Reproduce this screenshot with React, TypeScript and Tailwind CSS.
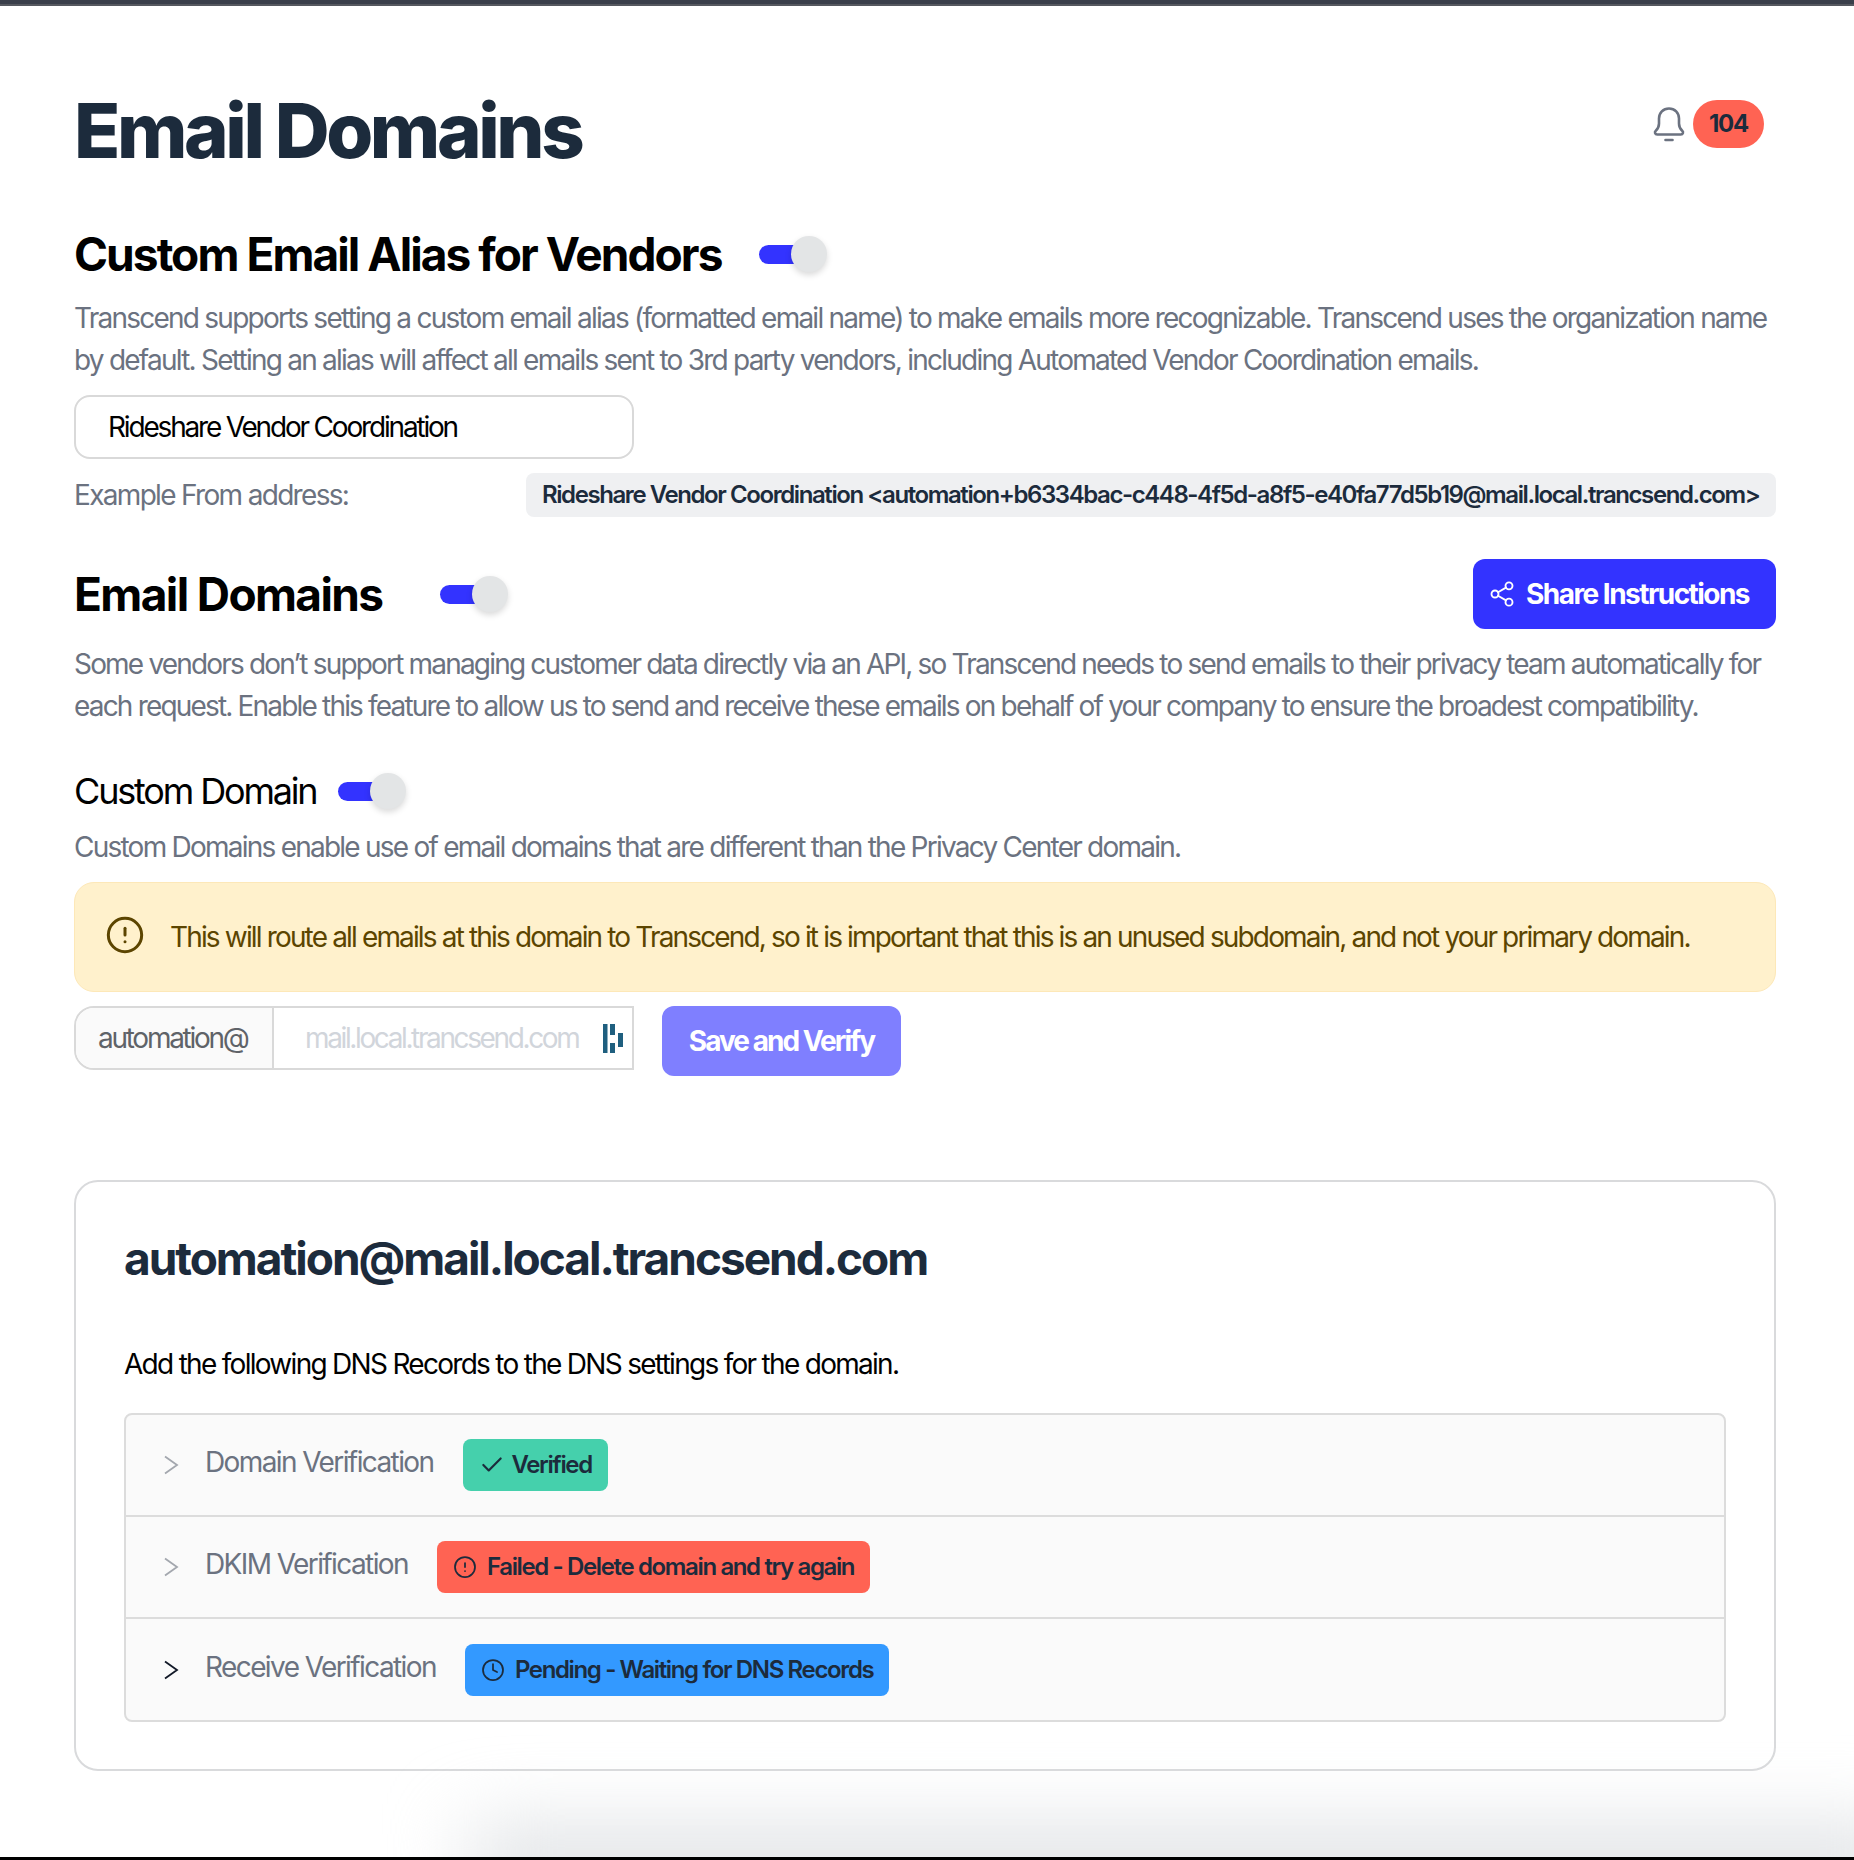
import { Share2, AlertCircle, Check, Clock } from 'lucide-react';

function Toggle() {
  return (
    <div className="flex items-center w-[68px] h-[36px]">
      <div className="w-[48px] h-[19px] rounded-full bg-[#3333ff]" />
      <div className="-ml-[16px] w-[36px] h-[36px] rounded-full bg-[#e3e5e6] shadow-[0_3px_6px_rgba(0,0,0,0.15)]" />
    </div>
  );
}

function DashIcon() {
  return (
    <svg width="20" height="29" viewBox="0 0 20 29" fill="#1f5f7f" className="shrink-0">
      <path d="M0 0h4.5v29H0z" />
      <path d="M7 0h5v11H7zM7 19h5v10H7z" />
      <path d="M15 9h5v14h-5z" />
    </svg>
  );
}

function BellIcon() {
  return (
    <svg width="32" height="35" viewBox="0 0 32 35" fill="none" stroke="#6b7280" strokeWidth="2.6" strokeLinecap="round" strokeLinejoin="round">
      <path d="M16 1.5c-5.8 0-10 4.4-10 10v5c0 3.4-1.2 5.4-3.2 7.2-1.6 1.5-.8 3.8 1.4 3.8h23.6c2.2 0 3-2.3 1.4-3.8-2-1.8-3.2-3.8-3.2-7.2v-5c0-5.6-4.2-10-10-10z" />
      <path d="M12.5 33h7" />
    </svg>
  );
}

function Chevron({ muted }: { muted?: boolean }) {
  return (
    <svg width="16" height="20" viewBox="0 0 16 20" fill="none" stroke={muted ? '#a3a7ae' : '#111827'} strokeWidth="1.8" className="shrink-0">
      <path d="M2 1.5L14 10L2 18.5" />
    </svg>
  );
}

function VerificationRow({ label, muted, children }: { label: string; muted?: boolean; children: React.ReactNode }) {
  return (
    <div className="flex items-center h-[102px] pl-[37px] gap-[26px] border-b-2 border-[#dcdcdc] last:border-b-0 last:h-[101px]">
      <Chevron muted={muted} />
      <div className="flex items-center gap-[29px]">
        <span className="text-[28px] tracking-[-0.057em] text-[#6b7280] -mt-[6px]">{label}</span>
        {children}
      </div>
    </div>
  );
}

function Badge({ color, icon, children }: { color: string; icon: React.ReactNode; children: React.ReactNode }) {
  return (
    <div className={`flex items-center gap-[10px] h-[52px] pl-[16px] pr-[16px] rounded-[8px] text-[24px] font-semibold tracking-[-0.057em] text-[#1c2b3c] ${color}`}>
      {icon}
      {children}
    </div>
  );
}

export default function App() {
  return (
    <div className="relative h-[1860px] overflow-hidden bg-white font-['Inter',sans-serif]">
      <div className="h-[6px] bg-[#3a3f4a] border-b-2 border-[#55585f]" />

      <div className="pl-[74px] pr-[78px]">
        {/* Header */}
        <div className="flex justify-between items-start pt-[84px] h-[226px]">
          <h1 className="text-[76px] leading-[80px] font-extrabold tracking-[-0.045em] text-[#1c2b3c]">Email Domains</h1>
          <div className="flex items-center gap-[8px] mt-[10px] mr-[12px]">
            <BellIcon />
            <span className="flex items-center justify-center w-[71px] h-[48px] rounded-full bg-[#ff6353] text-[24px] font-bold tracking-[-0.05em] text-[#1c2b3c]">104</span>
          </div>
        </div>

        {/* Alias */}
        <div className="flex items-center gap-[38px] h-[60px] mt-[-8px]">
          <h2 className="text-[46px] font-bold tracking-[-0.042em] text-black">Custom Email Alias for Vendors</h2>
          <Toggle />
        </div>
        <p className="mt-[13px] text-[28px] leading-[42px] tracking-[-0.063em] text-[#6b7280]">
          Transcend supports setting a custom email alias (formatted email name) to make emails more recognizable. Transcend uses the organization name by default. Setting an alias will affect all emails sent to 3rd party vendors, including Automated Vendor Coordination emails.
        </p>
        <div className="mt-[14px] flex items-center w-[560px] h-[64px] px-[32px] rounded-[16px] border-2 border-[#d9d9d9] text-[28px] tracking-[-0.078em] text-black">
          Rideshare Vendor Coordination
        </div>
        <div className="mt-[14px] flex items-center justify-between h-[44px]">
          <span className="text-[28px] tracking-[-0.06em] text-[#6b7280]">Example From address:</span>
          <span className="flex items-center w-[1250px] h-[44px] px-[16px] rounded-[8px] bg-[#eff0f2] text-[24px] font-semibold tracking-[-0.059em] text-[#1c2b3c] whitespace-nowrap">
            Rideshare Vendor Coordination &lt;automation+b6334bac-c448-4f5d-a8f5-e40fa77d5b19@mail.local.trancsend.com&gt;
          </span>
        </div>

        {/* Email Domains */}
        <div className="mt-[42px] flex items-center justify-between h-[70px]">
          <div className="flex items-center gap-[57px]">
            <h2 className="text-[46px] font-bold tracking-[-0.035em] text-black">Email Domains</h2>
            <Toggle />
          </div>
          <button className="flex items-center gap-[10px] w-[303px] h-[70px] pl-[15px] rounded-[12px] bg-[#3333ff] text-[28px] font-bold tracking-[-0.055em] text-white">
            <Share2 className="w-[28px] h-[28px]" strokeWidth={1.6} />
            Share Instructions
          </button>
        </div>
        <p className="mt-[14px] text-[28px] leading-[42px] tracking-[-0.065em] text-[#6b7280]">
          Some vendors don’t support managing customer data directly via an API, so Transcend needs to send emails to their privacy team automatically for each request. Enable this feature to allow us to send and receive these emails on behalf of your company to ensure the broadest compatibility.
        </p>

        {/* Custom Domain */}
        <div className="mt-[44px] flex items-center gap-[22px] h-[40px]">
          <span className="text-[36px] font-normal tracking-[-0.06em] text-black">Custom Domain</span>
          <Toggle />
        </div>
        <p className="mt-[15px] text-[28px] leading-[42px] tracking-[-0.063em] text-[#6b7280]">
          Custom Domains enable use of email domains that are different than the Privacy Center domain.
        </p>
        <div className="mt-[14px] flex items-center gap-[25px] h-[110px] pl-[30px] rounded-[20px] border border-[#fde8b8] bg-[#fff1cc] text-[28px] tracking-[-0.066em] text-[#5c4500] whitespace-nowrap">
          <AlertCircle className="w-[40px] h-[40px] -mt-[4px] shrink-0" strokeWidth={1.8} />
          This will route all emails at this domain to Transcend, so it is important that this is an unused subdomain, and not your primary domain.
        </div>

        <div className="mt-[14px] flex items-start gap-[28px]">
          <div className="flex w-[560px] h-[64px] border-2 border-[#d9d9d9] rounded-l-[20px] text-[28px] whitespace-nowrap">
            <span className="flex items-center shrink-0 w-[198px] pl-[22px] rounded-l-[18px] bg-[#fafafa] border-r-2 border-[#d9d9d9] text-[#5f6368] tracking-[-0.081em]">automation@</span>
            <div className="flex flex-1 min-w-0 items-center justify-between pl-[31px] pr-[9px] text-[#d1d5db] tracking-[-0.085em]">
              mail.local.trancsend.com
              <DashIcon />
            </div>
          </div>
          <button className="w-[239px] h-[70px] rounded-[12px] bg-[#7f7fff] text-[28px] font-bold tracking-[-0.07em] text-white">
            Save and Verify
          </button>
        </div>

        {/* DNS card */}
        <div className="mt-[104px] h-[591px] px-[48px] pt-[42px] rounded-[24px] border-2 border-[#d9dadc]">
          <h3 className="text-[46px] font-bold tracking-[-0.044em] text-[#1c2b3c]">automation@mail.local.trancsend.com</h3>
          <p className="mt-[50px] text-[28px] tracking-[-0.061em] text-black">Add the following DNS Records to the DNS settings for the domain.</p>
          <div className="mt-[28px] rounded-[8px] border-2 border-[#dcdcdc] bg-[#fafafa]">
            <VerificationRow label="Domain Verification" muted>
              <Badge color="bg-[#45d0ac]" icon={<Check className="w-[26px] h-[26px] -mr-[3px]" strokeWidth={2} />}>Verified</Badge>
            </VerificationRow>
            <VerificationRow label="DKIM Verification" muted>
              <Badge color="bg-[#ff6353]" icon={<AlertCircle className="w-[24px] h-[24px]" strokeWidth={1.75} />}>Failed - Delete domain and try again</Badge>
            </VerificationRow>
            <VerificationRow label="Receive Verification">
              <Badge color="bg-[#3399ff]" icon={<Clock className="w-[24px] h-[24px]" strokeWidth={1.75} />}>Pending - Waiting for DNS Records</Badge>
            </VerificationRow>
          </div>
        </div>
      </div>

      {/* Bottom edge of the capture */}
      <div className="absolute left-[470px] right-[-60px] bottom-[-40px] h-[70px] bg-[#dcdfe2] blur-[40px]" />
      <div className="absolute inset-x-0 bottom-0 h-[3px] bg-black" />
    </div>
  );
}
